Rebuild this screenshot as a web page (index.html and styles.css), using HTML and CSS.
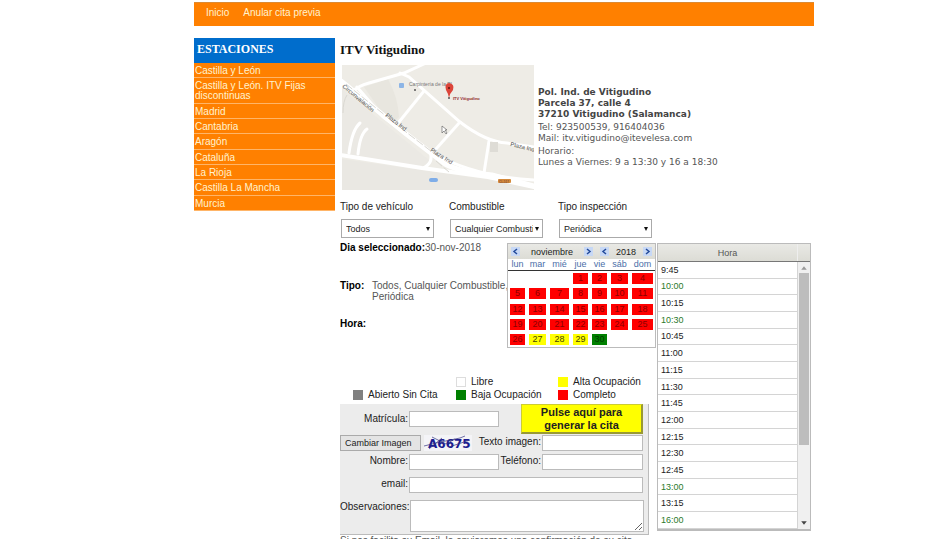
FILE: index.html
```html
<!DOCTYPE html>
<html lang="es">
<head>
<meta charset="utf-8">
<title>ITV Vitigudino - Cita previa</title>
<link rel="stylesheet" href="styles.css">
</head>
<body>
<div class="page">
  <nav class="topbar">
    <a href="#">Inicio</a>
    <a href="#">Anular cita previa</a>
  </nav>
  <div class="columns">
    <aside class="sidebar">
      <h2>ESTACIONES</h2>
      <ul>
        <li><a href="#">Castilla y León</a></li>
        <li class="tall"><a href="#">Castilla y León. ITV Fijas discontinuas</a></li>
        <li><a href="#">Madrid</a></li>
        <li><a href="#">Cantabria</a></li>
        <li><a href="#">Aragón</a></li>
        <li><a href="#">Cataluña</a></li>
        <li><a href="#">La Rioja</a></li>
        <li><a href="#">Castilla La Mancha</a></li>
        <li><a href="#">Murcia</a></li>
      </ul>
    </aside>
    <main>
      <h1>ITV Vitigudino</h1>
      <section class="station">
        <svg class="map" viewBox="0 0 192 125" role="img" aria-label="Mapa de la estación">
          <rect width="192" height="125" fill="#eeece6"/>
          <path d="M22 22 L46 14 Q56 32 57 52 L48 59 Z" fill="#e8e6df"/>
          <path d="M0 24 L88 96 L78 104 L0 88 Z" fill="#ebe9e4"/>
          <path d="M0 94 L80 105 L192 121 V125 H0Z" fill="#eae8e3"/>
          <g fill="none" stroke="#fff" stroke-linecap="round">
            <path d="M10 27 Q16 21 27 18 L62 8 L82 -1" stroke-width="3"/>
            <path d="M58 8 L67 12 L118 57 Q144 77 165 78 L192 82" stroke-width="3"/>
            <path d="M15 22 L41 52 L90 88 Q134 112 192 115" stroke-width="3"/>
            <path d="M-1 16 L63 68 L103 99 Q118 107 150 110 L192 121" stroke-width="5"/>
            <path d="M-1 90 L80 103 L146 112 L192 122" stroke-width="4"/>
            <path d="M82 26 L57 57 M118 57 L94 84 M147 76 L142 108" stroke-width="3"/>
            <path d="M18 58 Q10 65 7 88 M25 64 Q18 69 16 89" stroke-width="3"/>
            <path d="M88 87 Q92 98 81 103" stroke-width="3"/>
          </g>
          <path d="M4 19 L64 67 L98 93 M94 96 L107 107" fill="none" stroke="#d9d7d1" stroke-width="1" stroke-dasharray="8 2"/>
          <path d="M5 30 Q1 36 1 48" fill="none" stroke="#dad8d2" stroke-width="1"/>
          <rect x="148" y="77" width="8" height="10" fill="#dedcd6"/>
          <rect x="57" y="18" width="5" height="5" rx="1" fill="#8db5e6"/>
          <rect x="87" y="113" width="9" height="4" rx="2" fill="#7fade8"/>
          <rect x="156" y="114" width="13" height="4" rx="1" fill="#d58b3c"/>
          <text class="road-tag" x="157" y="118">CL-517</text>
          <circle cx="73" cy="25" r="1" fill="#555"/>
          <text class="place" x="67" y="21">Carpintería de la Pl</text>
          <path d="M107 33 Q106 28 104 25 Q102 19 107 18 Q113 19 111 25 Q108 28 107 33Z" fill="#dc453a"/>
          <circle cx="107" cy="23" r="1" fill="#5c1511"/>
          <circle cx="107" cy="33" r="1" fill="#555"/>
          <text class="pin-name" x="111" y="35">ITV Vitigudino</text>
          <text class="road" transform="translate(0 22) rotate(40)">Circunvalación</text>
          <text class="road" transform="translate(43 51) rotate(38)">Plaza Ind</text>
          <text class="road" transform="translate(88 86) rotate(33)">Plaza Ind</text>
          <text class="road" transform="translate(168 81) rotate(13)">Plaza Indus</text>
          <path d="M100 61 V68 L102 66 L104 69 L105 68 L103 65 H105Z" fill="#fff" stroke="#555" stroke-width=".6"/>
        </svg>
        <address>
          <p><strong>Pol. Ind. de Vitigudino<br>Parcela 37, calle 4<br>37210 Vitigudino (Salamanca)</strong></p>
          <p>Tel: 923500539, 916404036<br>Mail: itv.vitigudino@itevelesa.com</p>
          <p>Horario:<br>Lunes a Viernes: 9 a 13:30 y 16 a 18:30</p>
        </address>
      </section>

      <section class="filters">
        <div class="filter">
          <label for="vehiculo">Tipo de vehículo</label>
          <div class="select"><select id="vehiculo"><option>Todos</option></select></div>
        </div>
        <div class="filter">
          <label for="combustible">Combustible</label>
          <div class="select"><select id="combustible"><option>Cualquier Combusti</option></select></div>
        </div>
        <div class="filter">
          <label for="inspeccion">Tipo inspección</label>
          <div class="select"><select id="inspeccion"><option>Periódica</option></select></div>
        </div>
      </section>

      <div class="booking">
        <div class="booking-main">
          <div class="selection">
            <dl class="summary">
              <div class="day"><dt>Dia seleccionado:</dt><dd>30-nov-2018</dd></div>
              <div class="type"><dt>Tipo:</dt><dd>Todos, Cualquier Combustible, Periódica</dd></div>
              <div><dt>Hora:</dt><dd></dd></div>
            </dl>
            <div class="calendar">
              <div class="calendar-head">
                <button type="button" aria-label="Mes anterior"><svg viewBox="0 0 9 9"><path d="M6 2 L3 4.500 L6 7"/></svg></button>
                <span class="month">noviembre</span>
                <button type="button" aria-label="Mes siguiente"><svg viewBox="0 0 9 9"><path d="M3 2 L6 4.500 L3 7"/></svg></button>
                <button type="button" class="year-prev" aria-label="Año anterior"><svg viewBox="0 0 9 9"><path d="M6 2 L3 4.500 L6 7"/></svg></button>
                <span class="year">2018</span>
                <button type="button" aria-label="Año siguiente"><svg viewBox="0 0 9 9"><path d="M3 2 L6 4.500 L3 7"/></svg></button>
              </div>
              <table class="weekdays">
                <colgroup><col class="c-lun"><col class="c-mar"><col class="c-mie"><col class="c-jue"><col class="c-vie"><col class="c-sab"><col></colgroup>
                <thead><tr><th>lun</th><th>mar</th><th>mié</th><th>jue</th><th>vie</th><th>sáb</th><th>dom</th></tr></thead>
                <tbody>
                  <tr><td></td><td></td><td></td><td><span class="full">1</span></td><td><span class="full">2</span></td><td><span class="full">3</span></td><td><span class="full">4</span></td></tr>
                  <tr><td><span class="full">5</span></td><td><span class="full">6</span></td><td><span class="full">7</span></td><td><span class="full">8</span></td><td><span class="full">9</span></td><td><span class="full">10</span></td><td><span class="full">11</span></td></tr>
                  <tr><td><span class="full">12</span></td><td><span class="full">13</span></td><td><span class="full">14</span></td><td><span class="full">15</span></td><td><span class="full">16</span></td><td><span class="full">17</span></td><td><span class="full">18</span></td></tr>
                  <tr><td><span class="full">19</span></td><td><span class="full">20</span></td><td><span class="full">21</span></td><td><span class="full">22</span></td><td><span class="full">23</span></td><td><span class="full">24</span></td><td><span class="full">25</span></td></tr>
                  <tr><td><span class="full">26</span></td><td><span class="high">27</span></td><td><span class="high">28</span></td><td><span class="high">29</span></td><td><span class="low">30</span></td><td></td><td></td></tr>
                </tbody>
              </table>
            </div>
          </div>

          <ul class="legend">
            <li class="second"><i class="swatch free"></i>Libre</li>
            <li><i class="swatch high"></i>Alta Ocupación</li>
            <li class="first"><i class="swatch open"></i>Abierto Sin Cita</li>
            <li><i class="swatch low"></i>Baja Ocupación</li>
            <li><i class="swatch full"></i>Completo</li>
          </ul>

          <form class="request">
            <div class="row top">
              <label class="main-label" for="matricula">Matrícula:</label>
              <input class="short" id="matricula" type="text">
              <button class="submit" type="button">Pulse aquí para generar la cita</button>
            </div>
            <div class="row">
              <button class="change" type="button">Cambiar Imagen</button>
              <svg class="captcha" viewBox="0 0 48 16" role="img" aria-label="Imagen de control">
                <rect width="48" height="16" fill="#f4f4f7"/>
                <text x="4" y="13">A6675</text>
                <path d="M0 11 L12 8 L36 3 L41 1 M8 2 L22 9 L31 4 M5 14 L18 3 M25 12 L46 5" fill="none" stroke="#34347e" stroke-width=".7"/>
              </svg>
              <label class="side-label" for="texto">Texto imagen:</label>
              <input class="medium" id="texto" type="text">
            </div>
            <div class="row">
              <label class="main-label" for="nombre">Nombre:</label>
              <input class="short" id="nombre" type="text">
              <label class="side-label" for="telefono">Teléfono:</label>
              <input class="medium" id="telefono" type="text">
            </div>
            <div class="row spaced">
              <label class="main-label" for="email">email:</label>
              <input class="long" id="email" type="text">
            </div>
            <div class="row spaced">
              <label class="main-label" for="observaciones">Observaciones:</label>
              <textarea class="long" id="observaciones"></textarea>
            </div>
          </form>
        </div>

        <div class="hours">
          <div class="hours-head"><span>Hora</span></div>
          <div class="hours-body">
            <table>
              <tbody>
                <tr><td>9:45</td></tr>
                <tr><td class="available">10:00</td></tr>
                <tr><td>10:15</td></tr>
                <tr><td class="available">10:30</td></tr>
                <tr><td>10:45</td></tr>
                <tr><td>11:00</td></tr>
                <tr><td>11:15</td></tr>
                <tr><td>11:30</td></tr>
                <tr><td>11:45</td></tr>
                <tr><td>12:00</td></tr>
                <tr><td>12:15</td></tr>
                <tr><td>12:30</td></tr>
                <tr><td>12:45</td></tr>
                <tr><td class="available">13:00</td></tr>
                <tr><td>13:15</td></tr>
                <tr><td class="available">16:00</td></tr>
              </tbody>
            </table>
            <div class="scrollbar">
              <svg viewBox="0 0 9 9"><path d="M2 6 L4.500 3 L7 6Z" fill="#999"/></svg>
              <div class="thumb"></div>
              <svg class="down" viewBox="0 0 9 9"><path d="M2 3 L4.500 6 L7 3Z" fill="#444"/></svg>
            </div>
          </div>
        </div>
      </div>
      <p class="note">Si nos facilita su Email, le enviaremos una confirmación de su cita</p>
    </main>
  </div>
</div>
</body>
</html>
```
FILE: styles.css
```css
* { box-sizing: border-box; }
html { scrollbar-width: none; }
body {
  margin: 0;
  padding: 2px 0 0 58px;
  background: #fff;
  color: #222;
  font: 10px/12px "Liberation Sans", Arial, sans-serif;
}
button, input, select, textarea { font: inherit; color: inherit; margin: 0; border-radius: 0; }
ul, dl, dd, p { margin: 0; padding: 0; list-style: none; }
svg { display: block; }
a { color: inherit; text-decoration: none; }

.page { max-width: 620px; margin: 0 auto; }
.topbar {
  display: flex;
  gap: 14px;
  height: 24px;
  padding: 4px 12px;
  background: #ff8000;
  border-top: 1px solid #dc8a33;
  color: #fff3cf;
}
.columns { display: flex; align-items: flex-start; gap: 5px; margin-top: 12px; }

.sidebar { flex: 0 0 141px; background: #ff8000; color: #fff3cf; }
.sidebar h2 {
  margin: 0;
  height: 25px;
  padding: 4px 3px;
  background: #006dcc;
  color: #fff;
  font: bold 12px/14px "Liberation Serif", Georgia, serif;
}
.sidebar ul { display: flex; flex-direction: column; min-height: 148px; }
.sidebar li { flex: 1 0 auto; padding: 2px 1px 1px; border-bottom: 1px solid #ffb568; line-height: 11px; }
.sidebar .tall { padding-top: 3px; line-height: 10px; }

main { flex: 1; min-width: 0; }
h1 { margin: 4px 0 8px; color: #111; font: bold 13px/15px "Liberation Serif", Georgia, serif; }
.station { display: flex; align-items: center; gap: 4px; padding-left: 2px; }
.map { flex: 0 0 192px; height: 125px; }
.map text { font-family: "Liberation Sans", Arial, sans-serif; }
.map .road { font-size: 6px; fill: #555; }
.map .place { font-size: 5px; fill: #777; }
.map .pin-name { font-size: 4px; font-weight: bold; fill: #8e2727; }
.map .road-tag { font-size: 3px; fill: #633; }
address { color: #555; font: 9px/11px "DejaVu Sans", Verdana, sans-serif; }
address p + p { margin-top: 2px; }
address strong { color: #444; }

.filters { display: flex; gap: 15px; margin-top: 11px; }
.filter { flex: 0 0 94px; white-space: nowrap; }
.filter label { display: block; }
.select { position: relative; margin: 6px 0 0 1px; }
.select select {
  appearance: none;
  display: block;
  width: 100%;
  height: 19px;
  padding: 0 9px 0 4px;
  border: 1px solid #aaa;
  background: #fff;
  font-size: 9px;
}
.select::after {
  content: "";
  position: absolute;
  right: 4px;
  top: 8px;
  border: 2px solid transparent;
  border-top: 4px solid #111;
  border-bottom: 0;
}

.booking { display: flex; align-items: flex-start; gap: 1px; margin-top: 5px; }
.booking-main { flex: 0 0 316px; }
.selection { display: flex; height: 105px; }
.summary { flex: 1; margin-right: -2px; line-height: 11px; }
.summary div { display: flex; }
.summary dt { color: #000; font-weight: bold; }
.summary dd { color: #555; }
.summary .day { height: 37px; line-height: 9px; }
.summary .type { height: 38px; }
.summary .type dt { flex: 0 0 32px; }
.calendar { flex: 0 0 149px; border: 1px solid #bbb; background: #fff; }
.calendar-head {
  display: flex;
  align-items: center;
  height: 15px;
  padding: 0 3px;
  background: linear-gradient(#e9e9e5, #dcdcd5);
  color: #222;
  font-size: 9px;
}
.calendar-head button { width: 9px; height: 9px; padding: 0; border: 0; background: #c7d8f5; }
.calendar-head path { fill: none; stroke: #234a9b; stroke-width: 1.5; }
.calendar-head .month { flex: 1; text-align: center; }
.calendar-head .year-prev { margin-left: 7px; }
.calendar-head .year { width: 34px; text-align: center; }
.weekdays { width: 100%; height: 88px; table-layout: fixed; border-collapse: collapse; font-size: 9px; line-height: 11px; text-align: center; }
.c-mar, .c-sab { width: 21px; }
.c-lun { width: 19px; }
.c-mie { width: 23px; }
.c-jue, .c-vie { width: 19px; }
.weekdays th { height: 11px; padding: 0; border-bottom: 1px solid #333; color: #4a6ea8; font-weight: normal; }
.weekdays td { padding: 0 2px; }
.weekdays span { display: block; height: 11px; }
.full { background: #f00; color: #8c0000; }
.high { background: #ff0; color: #444400; }
.low { background: #008000; color: #003c00; }

.legend { display: grid; grid-template-columns: 103px 102px auto; row-gap: 1px; margin: 28px 0 3px 13px; }
.legend li { display: flex; align-items: center; gap: 5px; height: 12px; white-space: nowrap; }
.legend .second { grid-column: 2; }
.legend .first { grid-column: 1; }
.swatch { width: 10px; height: 10px; }
.swatch.free { border: 1px solid #ddd; }
.swatch.open { background: #808080; }

.request {
  display: flex;
  flex-direction: column;
  gap: 3px;
  width: 309px;
  padding: 0 5px 2px 0;
  background: #ececec;
  border-right: 1px solid #bbb;
  border-bottom: 1px solid #bbb;
}
.row { display: flex; align-items: flex-start; gap: 1px; min-height: 16px; }
.row.top { align-items: center; height: 30px; margin-bottom: -2px; }
.row.spaced { margin-top: 4px; }
.row label { line-height: 14px; white-space: nowrap; text-align: right; }
.main-label { flex: 0 0 68px; }
.side-label { flex: 1; }
.request input, .request textarea { height: 16px; padding: 1px 2px; border: 1px solid #bbb; background: #fff; }
.request .short { width: 90px; }
.request .medium { width: 101px; }
.request .long { flex: 0 0 234px; min-width: 0; }
.request textarea { height: 32px; }
.submit {
  width: 122px;
  height: 30px;
  margin-left: auto;
  padding: 0 10px;
  border: 1px solid #cccc33;
  border-right: 2px solid #999933;
  border-bottom: 2px solid #999933;
  background: #ff0;
  color: #222;
  font-weight: bold;
  font-size: 11px;
  line-height: 13px;
}
.change { width: 81px; height: 16px; padding: 0 4px; border: 1px solid #aaa; background: #e4e4e4; font-size: 9px; line-height: 12px; text-align: left; }
.captcha { flex: 0 0 48px; height: 16px; margin-left: 2px; }
.captcha text { font: bold 12px "DejaVu Sans", sans-serif; fill: #1b1b90; }

.hours { flex: 0 0 154px; border: 1px solid #bbb; border-bottom-width: 2px; }
.hours-head {
  display: flex;
  height: 18px;
  padding-right: 12px;
  background: linear-gradient(#e9e9e5, #dcdcd5);
  border-bottom: 1px solid #777;
  color: #555;
  font-size: 9px;
  line-height: 19px;
  text-align: center;
}
.hours-head span { flex: 1; border-right: 1px solid #eee; }
.hours-body { display: flex; height: 267px; }
.hours table { flex: 1; height: 267px; border-collapse: collapse; font-size: 9px; line-height: 12px; }
.hours td { padding: 0 3px; border-bottom: 1px solid #d4d4d4; border-right: 1px solid #d4d4d4; }
.hours .available { color: #2c7a2c; }
.scrollbar { display: flex; flex-direction: column; width: 12px; padding: 1px; background: #f0f0f0; }
.scrollbar svg { width: 10px; height: 10px; }
.scrollbar .thumb { height: 172px; background: #bdbdbd; }
.scrollbar .down { margin-top: auto; }
.note { color: #555; }
```
